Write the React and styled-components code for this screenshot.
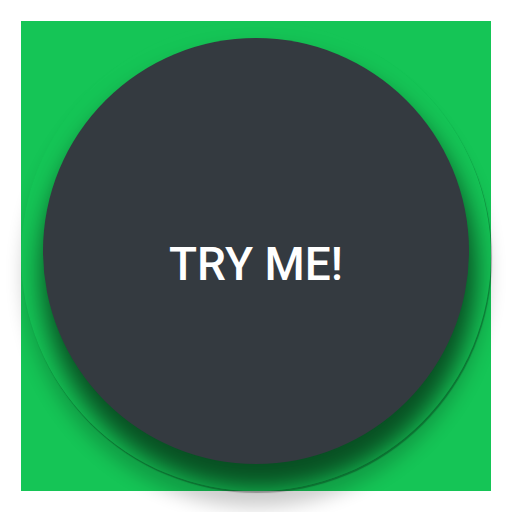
import React from "react";
import styled, { createGlobalStyle } from "styled-components";

const GlobalStyle = createGlobalStyle`
  html, body {
    margin: 0;
    padding: 0;
    background: #ffffff;
  }
  body {
    font-family: Roboto, "Liberation Sans", Arial, sans-serif;
  }
`;

const Page = styled.div`
  padding: 21px;
  width: 512px;
  height: 512px;
  box-sizing: border-box;
`;

const Stage = styled.div`
  width: 470px;
  height: 470px;
  background-color: #15c556;
`;

const Ring = styled.div`
  width: 470px;
  height: 470px;
  border-radius: 50%;
  background-color: #15c556;
  overflow: hidden;
  display: flex;
  align-items: center;
  justify-content: center;
  padding-bottom: 10px;
  box-sizing: border-box;
  box-shadow: 1px 2px 1px rgba(0, 0, 0, 0.3),
    0 18px 18px -2px rgba(0, 0, 0, 0.2);
`;

const Button = styled.button`
  width: 426px;
  height: 426px;
  flex-shrink: 0;
  border: none;
  border-radius: 50%;
  background-color: #343a40;
  color: #ffffff;
  font-family: Roboto, "Liberation Sans", Arial, sans-serif;
  font-size: 46px;
  font-weight: 500;
  padding: 26px 0 0 0;
  cursor: pointer;
  box-shadow: 3px 22px 24px 4px rgba(0, 0, 0, 0.6);
`;

const App = () => {
  return (
    <Page>
      <GlobalStyle />
      <Stage>
        <Ring>
          <Button>TRY ME!</Button>
        </Ring>
      </Stage>
    </Page>
  );
};

export default App;
